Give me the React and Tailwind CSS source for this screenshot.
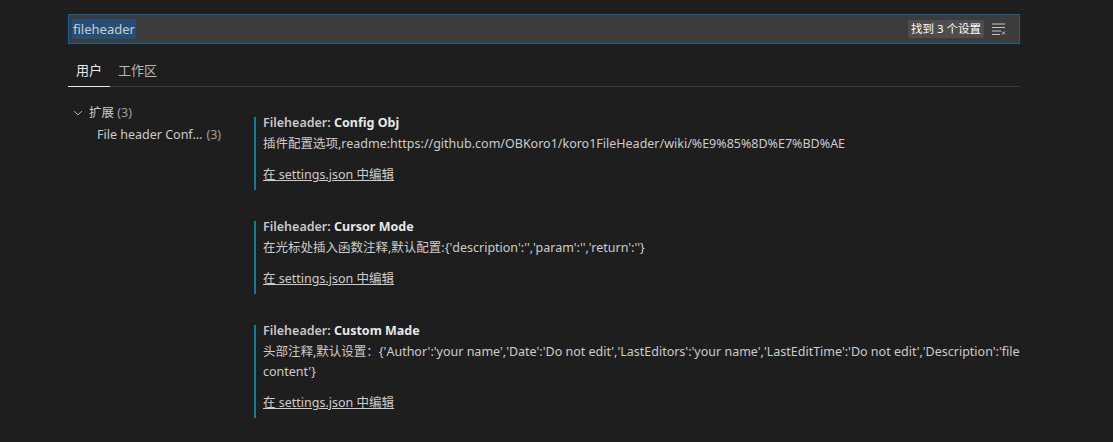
import React from 'react';

const font = { fontFamily: '"Noto Sans", "Noto Sans CJK SC", sans-serif' };

const settings = [
  {
    title: 'Config Obj',
    desc: '插件配置选项,readme:https://github.com/OBKoro1/koro1FileHeader/wiki/%E9%85%8D%E7%BD%AE',
  },
  {
    title: 'Cursor Mode',
    desc: "在光标处插入函数注释,默认配置:{'description':'','param':'','return':''}",
  },
  {
    title: 'Custom Made',
    desc: "头部注释,默认设置：{'Author':'your name','Date':'Do not edit','LastEditors':'your name','LastEditTime':'Do not edit','Description':'file content'}",
  },
];

const FilterIcon = () => (
  <svg width="16" height="16" viewBox="0 0 16 16" fill="none">
    <path d="M1 3h13M1 6.5h13M1 10h9M1 13.5h8" stroke="#c5c5c5" strokeWidth="1" />
    <path d="M11 10.5l3 3M14 10.5l-3 3" stroke="#c5c5c5" strokeWidth="1" />
  </svg>
);

const Chevron = () => (
  <svg width="12" height="12" viewBox="0 0 16 16" fill="none">
    <path d="M3 5.5l5 5 5-5" stroke="#c5c5c5" strokeWidth="1.3" />
  </svg>
);

const SettingItem = ({ title, desc }) => (
  <div className="border-l-2 border-[#0c7d9d] pl-[7px] pb-[5px] mb-[31px] text-[12.5px] text-[#cccccc]">
    <div className="h-[12px] leading-[12px] whitespace-nowrap">
      <span className="font-semibold text-[#c8c8c8]">Fileheader: </span>
      <span className="font-bold text-[#e7e7e7]">{title}</span>
    </div>
    <div className="mt-[5px] leading-[20px] w-[760px]">{desc}</div>
    <div className="mt-[11px] leading-[20px] underline">在 settings.json 中编辑</div>
  </div>
);

export default function App() {
  return (
    <div className="w-[1113px] h-[442px] bg-[#1e1e1e] overflow-hidden" style={font}>
      <div className="pl-[68px] pt-[14px] w-[1020px]">
        <div className="h-[30px] w-[952px] bg-[#3c3c3c] border border-[#0e639c] flex items-center pl-[3px] pr-[12px]">
          <span className="bg-[#264f78] text-[#cccccc] text-[13px] leading-[20px] px-[1px]">fileheader</span>
          <div className="ml-auto flex items-center gap-[7px]">
            <span className="bg-[#4d4d4d] text-white text-[11.5px] leading-[18px] px-[3px] rounded-[2px]">
              找到 3 个设置
            </span>
            <FilterIcon />
          </div>
        </div>

        <div className="mt-[16px] w-[952px] flex border-b border-[#3a3a3a]">
          <div className="w-[42px] pl-[8px] pb-[6px] leading-[20px] text-[13px] text-[#e7e7e7] border-b border-[#e7e7e7] -mb-px">用户</div>
          <div className="pl-[8px] pb-[6px] leading-[20px] text-[13px] text-[#b8b8b8]">工作区</div>
        </div>
      </div>

      <div className="flex mt-[15px]">
        <div className="w-[186px] pl-[72px] text-[12.5px] text-[#cccccc]">
          <div className="flex items-center h-[22px] gap-[5px]">
            <Chevron />
            <span>扩展 <span className="text-[#a0a0a0]">(3)</span></span>
          </div>
          <div className="h-[22px] flex items-center pl-[25px] whitespace-nowrap">
            File header Conf... <span className="ml-[4px] text-[#a0a0a0]">(3)</span>
          </div>
        </div>
        <div className="pl-[68px] pt-[15px]">
          {settings.map((s) => (
            <SettingItem key={s.title} {...s} />
          ))}
        </div>
      </div>
    </div>
  );
}
